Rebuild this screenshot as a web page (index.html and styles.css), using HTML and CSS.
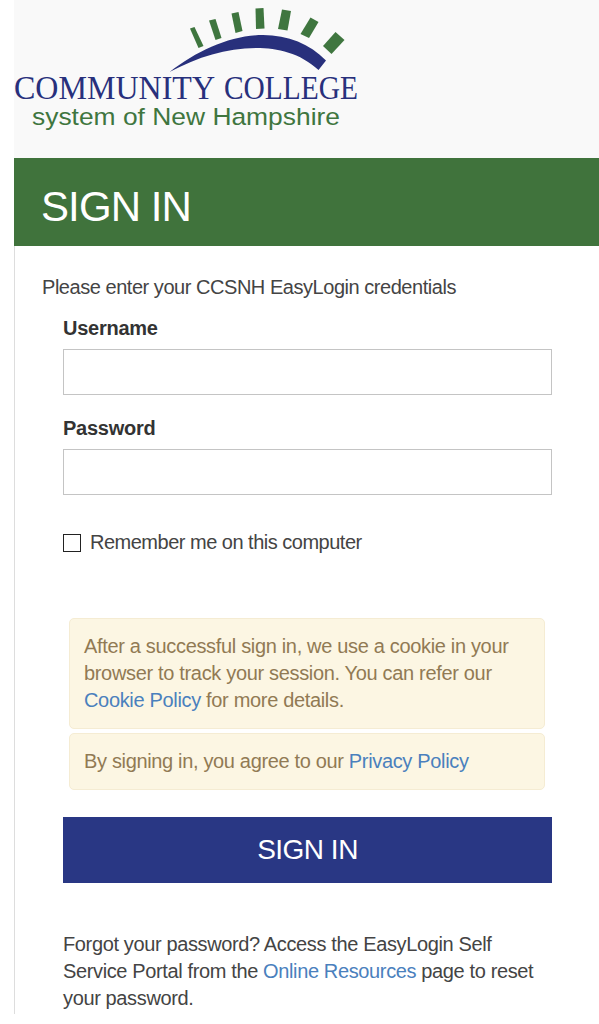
FILE: index.html
```
<!DOCTYPE html>
<html lang="en">
  <head>
    <meta charset="UTF-8" />
    <meta name="viewport" content="width=device-width, initial-scale=1.0" />
    <title>Sign In</title>
    <link rel="stylesheet" href="styles.css">
  </head>
  <body>
    <div class="container">
      <header class="header">
        <svg class="logo" viewBox="0 0 360 140" role="img" aria-label="Community College System of New Hampshire">
          <!-- rays -->
          <g fill="#3f763f">
            <path d="M176 28.5L180.500 27L189.500 46L184.5 48Z" />
            <path d="M195 20.5L201.500 19L207.500 38L201.5 40Z" />
            <path d="M217.500 13.5L224.500 12L228.500 31L221.5 33Z" />
            <path d="M241.500 8.5L249.500 8L250.500 28.500L242 29Z" />
            <path d="M268 9.500L277 11L273.500 30.500L264 29Z" />
            <path d="M296.500 17.500L304.500 22L295 38L286.500 34Z" />
            <path d="M321.500 32L330.500 40L317.500 54L309 46Z" />
          </g>
          <path fill="#28307c" d="M155.500 72C184 50 217 35 249 35C274 35 296 44 312 60.500L304.500 70C286 53 264 48 242 48C212 48 184 57 155.500 72Z" />
          <text class="logo-name" x="0" y="99" textLength="201" lengthAdjust="spacingAndGlyphs">COMMUNITY</text>
          <text class="logo-name" x="210" y="99" textLength="134" lengthAdjust="spacingAndGlyphs">COLLEGE</text>
          <text class="logo-sub" x="18" y="125" textLength="308" lengthAdjust="spacingAndGlyphs">system of New Hampshire</text>
        </svg>
      </header>

      <h1>SIGN IN</h1>

      <main class="panel">
        <p class="intro">Please enter your CCSNH EasyLogin credentials</p>
        <form id="loginForm">
          <div class="form-group">
            <label for="username">Username</label>
            <input type="text" id="username" name="username" />
          </div>

          <div class="form-group">
            <label for="password">Password</label>
            <input type="password" id="password" name="password" />
          </div>

          <div class="remember">
            <input type="checkbox" id="remember" name="remember" />
            <label for="remember">Remember me on this computer</label>
          </div>

          <div class="notice">
            After a successful sign in, we use a cookie in your<br />
            browser to track your session. You can refer our<br />
            <a href="#">Cookie Policy</a> for more details.
          </div>
          <div class="notice">
            By signing in, you agree to our <a href="#">Privacy Policy</a>
          </div>

          <button type="submit">SIGN IN</button>
        </form>

        <p class="help">
          Forgot your password? Access the EasyLogin Self<br />
          Service Portal from the <a href="#">Online Resources</a> page to reset<br />
          your password.
        </p>
      </main>
    </div>
  </body>
</html>
```

FILE: styles.css
```
* {
  box-sizing: border-box;
}
body {
  margin: 0;
  background-color: #fff;
  color: #444;
  font-family: "Liberation Sans", Arial, sans-serif;
  font-size: 20px;
  letter-spacing: -0.33px;
  line-height: 27px;
}
a {
  color: #4a80bd;
  text-decoration: none;
}
.container {
  margin-left: 14px;
}
.header {
  height: 158px;
  background-color: #f9f9f9;
}
.logo {
  display: block;
  width: 360px;
  height: 140px;
  letter-spacing: normal;
}
.logo-name {
  font-family: "Liberation Serif", serif;
  font-size: 33px;
  fill: #28307c;
}
.logo-sub {
  font-size: 24.5px;
  fill: #3f763f;
}
h1 {
  height: 88px;
  margin: 0;
  padding: 5px 27px 0;
  background-color: #40733c;
  color: #fff;
  font-size: 42px;
  font-weight: normal;
  letter-spacing: -0.9px;
  line-height: 88px;
}
.panel {
  height: 768px;
  padding: 28px 40px 0 48px;
  border-left: 1px solid #ddd;
}
.intro {
  margin: 0 0 14px -21px;
  letter-spacing: -0.46px;
}
.form-group {
  margin-bottom: 20px;
}
.form-group label {
  display: block;
  margin-bottom: 7px;
  color: #333;
  font-weight: bold;
  letter-spacing: -0.25px;
}
.form-group input {
  display: block;
  width: 489px;
  height: 46px;
  border: 1px solid #c4c4c4;
}
.remember {
  display: flex;
  align-items: center;
  gap: 9px;
  margin: 34px 0 62px;
  letter-spacing: -0.5px;
}
.remember input {
  width: 18px;
  height: 18px;
  margin: 0;
  appearance: none;
  border: 1px solid #222;
  background-color: #fff;
}
.notice {
  width: 476px;
  margin: 0 0 4px 6px;
  padding: 14px;
  border: 1px solid #f5ecd3;
  border-radius: 5px;
  background-color: #fcf6e3;
  color: #917a54;
}
.notice + .notice {
  letter-spacing: -0.34px;
}
button {
  width: 489px;
  height: 66px;
  margin-top: 23px;
  border: 0;
  background-color: #293784;
  color: #fff;
  font-family: inherit;
  font-size: 28px;
  letter-spacing: -0.5px;
}
.help {
  margin: 48px 0 0;
  letter-spacing: -0.37px;
}
```
